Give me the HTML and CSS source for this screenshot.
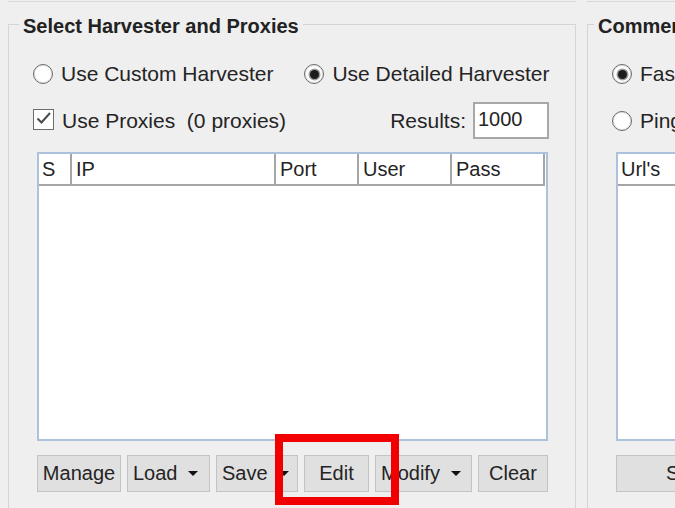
FILE: index.html
```html
<!DOCTYPE html>
<html lang="en">

<head>
    <meta charset="UTF-8">
    <title>Harvester</title>
    <link rel="stylesheet" href="styles.css">
</head>

<body>

    <div class="window">
        <div class="column column-left">
            <div class="edge"></div>
            <fieldset class="group">
                <legend>Select Harvester and Proxies</legend>
                <div class="group-body">
                    <div class="row row-options">
                        <label class="option"><input type="radio" name="harvester" class="radio">Use Custom Harvester</label>
                        <label class="option"><input type="radio" name="harvester" class="radio" checked>Use Detailed Harvester</label>
                    </div>
                    <div class="row row-proxies">
                        <label class="option">
                            <span class="check">
                                <svg width="21" height="21" viewBox="0 0 21 21">
                                    <path d="M4.5 10.5 L8.5 14.5 L17 5" fill="none" stroke="#4a4a4a" stroke-width="2"/>
                                </svg>
                            </span>
                            <span class="keep-space">Use Proxies  (0 proxies)</span>
                        </label>
                        <label class="results">Results:<input class="field" type="text" value="1000"></label>
                    </div>

                    <div class="table">
                        <div class="table-head cols-proxies">
                            <div class="th">S</div>
                            <div class="th">IP</div>
                            <div class="th">Port</div>
                            <div class="th">User</div>
                            <div class="th">Pass</div>
                        </div>
                        <div class="table-body"></div>
                    </div>

                    <div class="buttons">
                        <button class="btn btn-manage">Manage</button>
                        <button class="btn btn-menu btn-load">Load<span class="caret"></span></button>
                        <button class="btn btn-menu btn-save">Save<span class="caret"></span></button>
                        <button class="btn btn-edit">Edit</button>
                        <button class="btn btn-menu btn-modify">Modify<span class="caret"></span></button>
                        <button class="btn btn-clear">Clear</button>
                        <div class="highlight"></div>
                    </div>
                </div>
            </fieldset>
        </div>

        <div class="column column-right">
            <div class="edge"></div>
            <fieldset class="group group-right">
                <legend>Commenter Settings</legend>
                <div class="group-body">
                    <div class="row row-options">
                        <label class="option"><input type="radio" name="mode" class="radio" checked>Fast Mode</label>
                    </div>
                    <div class="row row-proxies">
                        <label class="option"><input type="radio" name="mode" class="radio">Ping Mode</label>
                    </div>

                    <div class="table">
                        <div class="table-head cols-urls">
                            <div class="th">Url's</div>
                        </div>
                        <div class="table-body"></div>
                    </div>

                    <div class="buttons">
                        <button class="btn btn-submit">Submit</button>
                    </div>
                </div>
            </fieldset>
        </div>
    </div>

</body>

</html>
```

FILE: styles.css
```css
body, html {
    margin: 0;
    padding: 0;
    width: 675px;
    height: 508px;
    overflow: hidden;
    background-color: #efefef;
    font-family: "Liberation Sans", Arial, sans-serif;
    font-size: 20px;
    color: #242424;
}

.window {
    display: flex;
    gap: 11px;
    padding-left: 8px;
}

.column {
    flex-shrink: 0;
}

.column-left {
    width: 568px;
}

.column-right {
    width: 330px;
}

.edge {
    height: 1px;
    border-bottom: 1px solid #d9d9d9;
}

.group {
    margin: 10px 0 0;
    padding: 0;
    min-width: 0;
    border: 1px solid #d4d4d4;
}

.group legend {
    margin-left: 10px;
    padding: 4px 4px 0;
    line-height: 20px;
    font-weight: bold;
    color: #222;
}

.group-right legend {
    margin-left: 6px;
}

.group-body {
    padding: 0 26px 30px 24px;
}

.row {
    display: flex;
    align-items: center;
}

.row-options {
    height: 36px;
    margin-top: 20px;
    gap: 31px;
}

.row-proxies {
    height: 37px;
    margin-top: 10px;
}

.option {
    display: flex;
    align-items: center;
    gap: 8px;
    font-size: 21px;
    white-space: nowrap;
}

.keep-space {
    white-space: pre;
}

.radio {
    appearance: none;
    margin: 0;
    width: 20px;
    height: 20px;
    border-radius: 50%;
    border: 1.5px solid #6b6b6b;
    background-color: #fff;
    box-shadow: inset 0 0 0 1px #e2e2e2;
    display: flex;
    align-items: center;
    justify-content: center;
}

.radio:checked::after {
    content: "";
    width: 9px;
    height: 9px;
    border-radius: 50%;
    background-color: #1c1c1c;
    box-shadow: 0 0 0 1.5px #9c9c9c;
}

.check {
    width: 21px;
    height: 21px;
    box-sizing: border-box;
    border: 1.5px solid #6b6b6b;
    background-color: #fff;
    display: flex;
    margin-top: -3px;
}

.check svg {
    margin: -1.5px;
}

.results {
    margin-left: auto;
    display: flex;
    align-items: center;
    gap: 7px;
    font-size: 21px;
}

.field {
    width: 76px;
    height: 37px;
    box-sizing: border-box;
    border: 2px solid #a8a8a8;
    padding: 0 0 3px 3px;
    font-family: inherit;
    font-size: 20px;
    color: #242424;
    background-color: #fff;
}

.table {
    margin: 13px 1px 0 4px;
    border: 2px solid #abc2da;
    background-color: #fff;
}

.table-head {
    display: grid;
}

.cols-proxies {
    grid-template-columns: 33px 204px 83px 93px 93px;
}

.cols-urls {
    grid-template-columns: 1fr;
}

.th {
    line-height: 30px;
    padding-left: 4px;
    border-right: 2px solid #a6a6a6;
    border-bottom: 2px solid #a6a6a6;
}

.th:first-child {
    padding-left: 3px;
}

.cols-urls .th {
    border-right: none;
}

.table-body {
    height: 253px;
}

.buttons {
    position: relative;
    display: flex;
    gap: 6px;
    margin: 14px 0 0 4px;
}

.btn {
    height: 37px;
    padding: 0;
    box-sizing: border-box;
    border: 1.5px solid #c3c3c3;
    background-color: #e0e0e0;
    font-family: inherit;
    font-size: 20px;
    color: #242424;
    display: flex;
    align-items: center;
    justify-content: center;
}

.btn-menu {
    justify-content: space-between;
    padding: 0 11px 0 5px;
}

.caret {
    width: 0;
    height: 0;
    border-left: 5px solid transparent;
    border-right: 5px solid transparent;
    border-top: 5px solid #111;
}

.btn-manage {
    width: 84px;
}

.btn-load {
    width: 83px;
}

.btn-save {
    width: 82px;
    padding-right: 8px;
}

.btn-edit {
    width: 65px;
}

.btn-modify {
    width: 97px;
    padding-right: 10px;
}

.btn-clear {
    width: 70px;
}

.btn-submit {
    width: 162px;
}

.highlight {
    position: absolute;
    left: 238px;
    top: -21px;
    width: 124px;
    height: 71px;
    box-sizing: border-box;
    border: 8px solid #f20000;
}
```
